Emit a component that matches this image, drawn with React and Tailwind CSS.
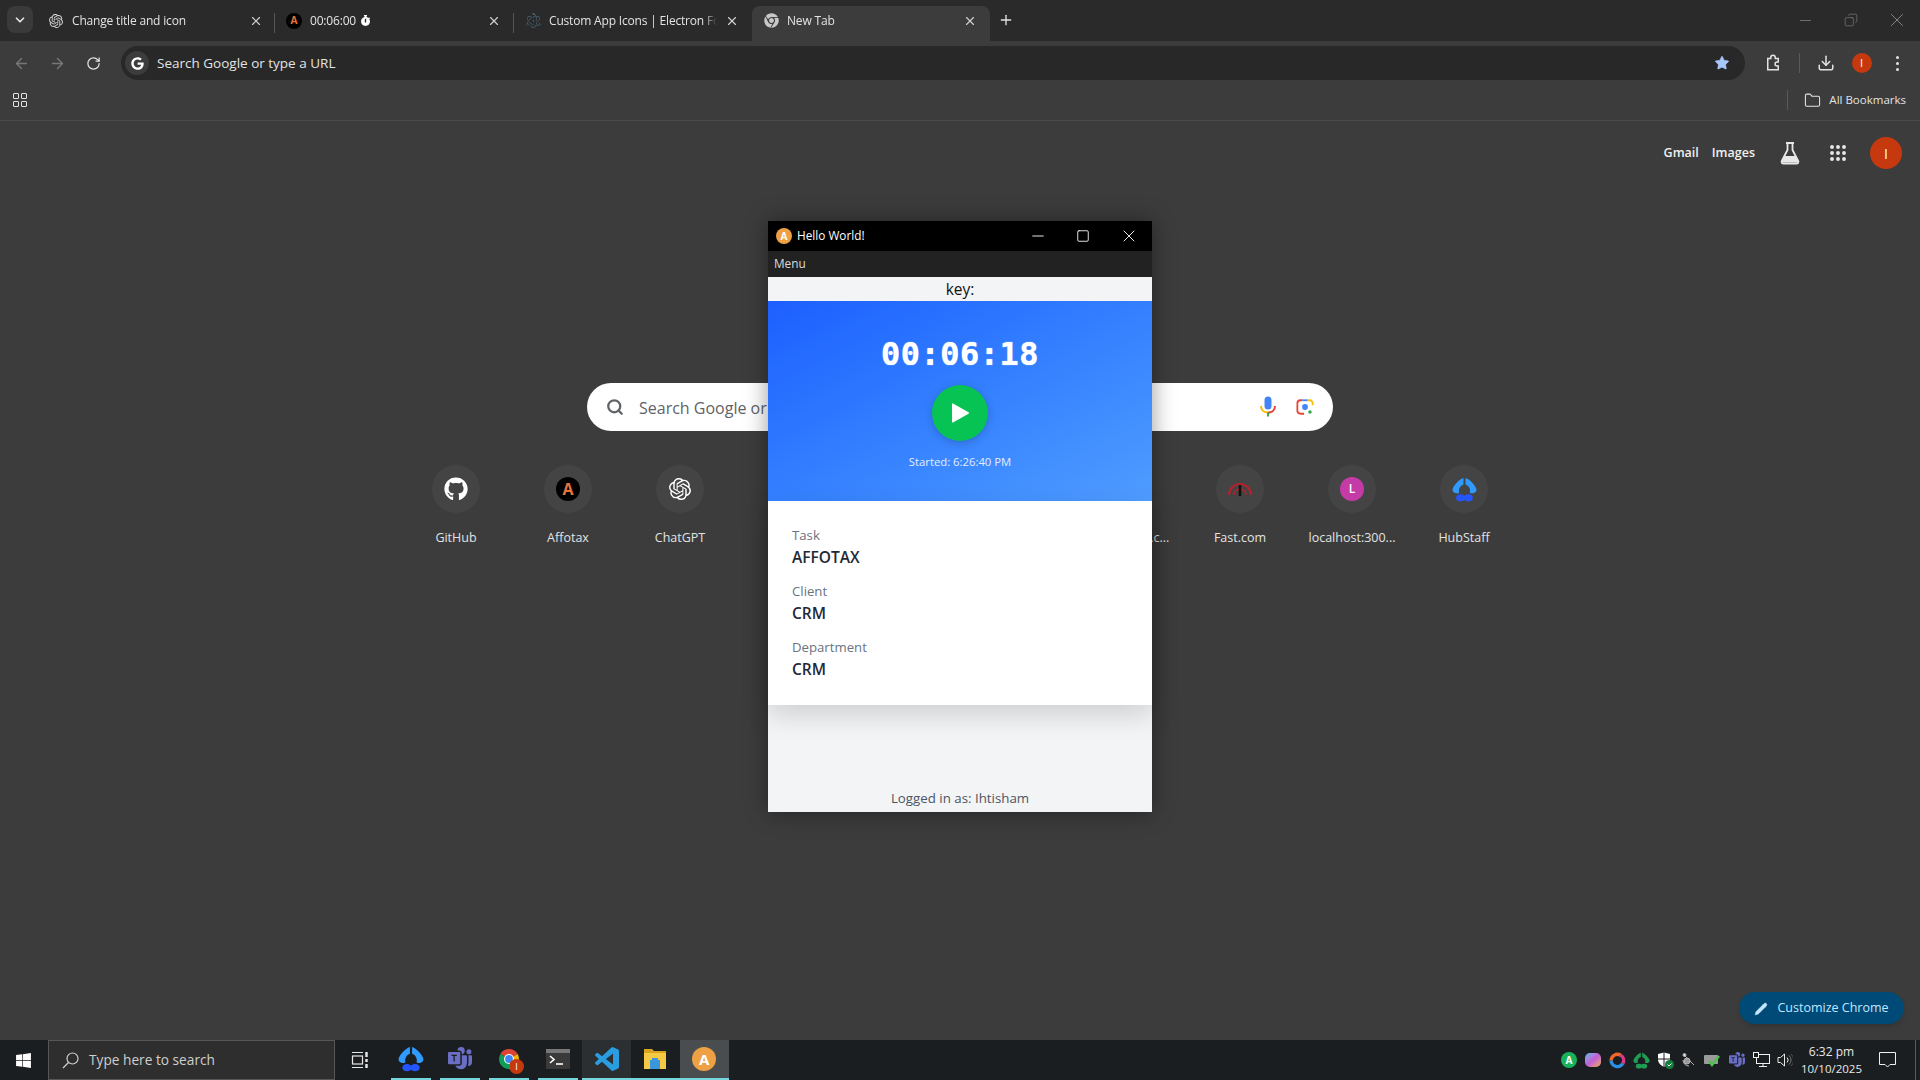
import { ArrowLeft, ArrowRight, ChevronDown, Folder, Minus, Plus, RotateCw, Square, Star, X, Download, Pencil, Search, Copy } from 'lucide-react'
import { FaGithub, FaGoogle, FaChrome, FaStopwatch, FaWindows } from 'react-icons/fa'
import { SiOpenai, SiElectron } from 'react-icons/si'
import { BsMicrosoftTeams } from 'react-icons/bs'

const SANS = 'font-["Open_Sans",sans-serif]'

function HubIcon({ size = 24, top = '#2f9bff', bottom = '#2456ff' }) {
  return (
    <svg width={size} height={size} viewBox="0 0 24 24">
      <path d="M11 1C8 1.500 2 7.500.6 11.500c-.5 2.300 1.400 4.200 4.400 4.200.6 0 1.500-.1 1.900-.6a6.200 6.200 0 0 1 4.100-7.900z" fill={top} />
      <path d="M13 1c3 .5 9 6.500 10.400 10.500.5 2.300-1.400 4.200-4.400 4.200-.6 0-1.500-.1-1.900-.6a6.200 6.200 0 0 0-4.100-7.900z" fill={top} />
      <ellipse cx="8.300" cy="20" rx="4.300" ry="3.400" fill={bottom} />
      <ellipse cx="15.700" cy="20" rx="4.300" ry="3.400" fill={bottom} />
    </svg>
  )
}

function ChromeLogo({ size = 24 }) {
  return (
    <svg width={size} height={size} viewBox="0 0 48 48">
      <path d="M24 24 6.68 14A20 20 0 0 1 41.32 14Z" fill="#db4437" />
      <path d="M24 24 41.32 14A20 20 0 0 1 24 44Z" fill="#f4b400" />
      <path d="M24 24V44A20 20 0 0 1 6.68 14Z" fill="#0f9d58" />
      <circle cx="24" cy="24" r="10" fill="#fff" />
      <circle cx="24" cy="24" r="7.8" fill="#4285f4" />
    </svg>
  )
}

function AppsGrid({ size = 18 }) {
  const dots = [4, 12, 20]
  return (
    <svg width={size} height={size} viewBox="0 0 24 24" fill="#e8e8e8">
      {dots.map((y) => dots.map((x) => <circle key={`${x}-${y}`} cx={x} cy={y} r="2.6" />))}
    </svg>
  )
}

function CodeLogo({ size = 24 }) {
  return (
    <svg width={size} height={size} viewBox="0 0 24 24" fill="#2a9de0">
      <path d="M23.15 2.587L18.21.21a1.494 1.494 0 0 0-1.705.29l-9.46 8.63-4.12-3.128a.999.999 0 0 0-1.276.057L.327 7.261A1 1 0 0 0 .326 8.74L3.899 12 .326 15.26a1 1 0 0 0 .001 1.479L1.65 17.94a.999.999 0 0 0 1.276.057l4.12-3.128 9.46 8.63a1.492 1.492 0 0 0 1.704.29l4.942-2.377A1.5 1.5 0 0 0 24 20.06V3.939a1.5 1.5 0 0 0-.85-1.352zm-5.146 14.861L10.826 12l7.178-5.448v10.896z" />
    </svg>
  )
}

function AffotaxBadge() {
  return (
    <div className="w-[24px] h-[24px] rounded-full bg-[#000] flex items-center justify-center text-[16px] font-bold text-[#e8743b]">A</div>
  )
}

function OrangeA({ size }) {
  return (
    <div className={`${size} rounded-full bg-[#eda044] flex items-center justify-center font-bold text-white`}>A</div>
  )
}

function Tab({ icon, title, active, box = 'w-[238px] pr-[13px]' }) {
  return (
    <div className={`${box} h-[35px] pl-[11px] pb-[6px] flex items-center gap-[8px] rounded-t-[8px] ${active ? 'bg-[#3c3c3c]' : ''}`}>
      <span className="w-[16px] h-[16px] flex items-center justify-center shrink-0">{icon}</span>
      <span className="flex-1 min-w-0 flex items-center gap-[4px] overflow-hidden whitespace-nowrap text-[12px] tracking-[-0.18px] text-[#e3e3e3] [mask-image:linear-gradient(to_right,black_92%,transparent)]">{title}</span>
      <X size={14} strokeWidth={2} className="shrink-0 text-[#d0d0d0]" />
    </div>
  )
}

function TabStrip() {
  return (
    <div className="h-[41px] bg-[#2a2a2a] flex items-end shrink-0">
      <div className="ml-[7px] mr-[4px] mb-[8px] w-[26px] h-[27px] rounded-[8px] bg-[#3a3a3a] flex items-center justify-center">
        <ChevronDown size={14} strokeWidth={3} className="text-[#e3e3e3]" />
      </div>
      <Tab box="w-[237px] pr-[11px]" title="Change title and icon" icon={<SiOpenai size={14} className="text-[#d8d8d8]" />} />
      <div className="w-px h-[20px] mb-[8px] bg-[#555]" />
      <Tab
        box="w-[238px] pr-[12px]"
        title={<><span>00:06:00</span><FaStopwatch size={11} className="text-white" /></>}
        icon={<span className="w-[16px] h-[16px] rounded-full bg-black flex items-center justify-center text-[10px] font-bold text-[#e8743b]">A</span>}
      />
      <div className="w-px h-[20px] mb-[8px] bg-[#555]" />
      <Tab title="Custom App Icons | Electron Fo" icon={<SiElectron size={15} className="text-[#5a7f9a]" />} />
      <Tab active title="New Tab" icon={<FaChrome size={15} className="text-[#c8c8c8]" />} />
      <Plus size={16} strokeWidth={2} className="ml-[8px] mb-[13px] text-[#e3e3e3]" />
      <div className="ml-auto flex h-[41px] text-[#8c8c8c]">
        <div className="w-[46px] flex items-center justify-center pb-[1px]"><Minus size={17} strokeWidth={1} /></div>
        <div className="w-[46px] flex items-center justify-center pb-[1px]"><Copy size={14} strokeWidth={1} className="-scale-x-100" /></div>
        <div className="w-[46px] flex items-center justify-center pb-[1px]"><X size={22} strokeWidth={1} /></div>
      </div>
    </div>
  )
}

function ExtensionIcon() {
  return (
    <svg width="18" height="18" viewBox="0 0 24 24" fill="none" stroke="#e3e3e3" strokeWidth="2">
      <path d="M5 6h4V4.500a3 3 0 0 1 6 0V6h4v4.500h-1.500a2.700 2.700 0 0 0 0 5.400H19V21H5z" />
    </svg>
  )
}

function Toolbar() {
  return (
    <div className="h-[39px] bg-[#3c3c3c] pt-[5px] flex items-start shrink-0 text-[#e3e3e3]">
      <div className="pl-[3px] flex h-[34px]">
        <div className="w-[36px] flex items-center justify-center text-[#777]"><ArrowLeft size={17} strokeWidth={2} /></div>
        <div className="w-[36px] flex items-center justify-center text-[#777]"><ArrowRight size={17} strokeWidth={2} /></div>
        <div className="w-[36px] flex items-center justify-center"><RotateCw size={15} strokeWidth={2} /></div>
      </div>
      <div className="ml-[10px] flex-1 h-[34px] rounded-full bg-[#282828] pl-[4px] pr-[15px] flex items-center">
        <span className="w-[24px] h-[24px] rounded-full bg-[#3c3c3c] flex items-center justify-center"><FaGoogle size={13} className="text-white" /></span>
        <span className="ml-[8px] text-[13.5px] text-[#e3e3e3]">Search Google or type a URL</span>
        <Star size={16} fill="#a8c7fa" strokeWidth={1} className="ml-auto text-[#a8c7fa]" />
      </div>
      <div className="ml-[10px] h-[34px] flex items-center pr-[5px]">
        <div className="w-[36px] flex justify-center"><ExtensionIcon /></div>
        <div className="ml-[8px] w-px h-[20px] bg-[#5a5a5a]" />
        <div className="ml-[8px] w-[36px] flex justify-center"><Download size={18} strokeWidth={2} /></div>
        <div className="w-[35px] flex justify-center">
          <span className="w-[20px] h-[20px] rounded-full bg-[#c6390f] flex items-center justify-center text-[11px] text-white">I</span>
        </div>
        <div className="w-[36px] flex flex-col items-center gap-[3px]">
          <span className="w-[3px] h-[3px] rounded-full bg-[#e3e3e3]" />
          <span className="w-[3px] h-[3px] rounded-full bg-[#e3e3e3]" />
          <span className="w-[3px] h-[3px] rounded-full bg-[#e3e3e3]" />
        </div>
      </div>
    </div>
  )
}

function BookmarksBar() {
  return (
    <div className="h-[41px] bg-[#3c3c3c] border-b border-[#4b4b4b] pl-[13px] pr-[14px] flex items-center shrink-0">
      <div className="grid grid-cols-2 gap-[2px]">
        <span className="w-[6px] h-[6px] border border-[#e3e3e3] rounded-[1px]" />
        <span className="w-[6px] h-[6px] border border-[#e3e3e3] rounded-[1px]" />
        <span className="w-[6px] h-[6px] border border-[#e3e3e3] rounded-[1px]" />
        <span className="w-[6px] h-[6px] border border-[#e3e3e3] rounded-[1px]" />
      </div>
      <div className="ml-auto w-px h-[20px] bg-[#5a5a5a]" />
      <Folder size={17} strokeWidth={1.5} className="ml-[16px] text-[#e3e3e3]" />
      <span className="ml-[8px] text-[11.5px] text-[#e3e3e3]">All Bookmarks</span>
    </div>
  )
}

function Shortcut({ label, icon }) {
  return (
    <div className="w-[112px] flex flex-col items-center">
      <div className="w-[48px] h-[48px] rounded-full bg-[#444] flex items-center justify-center">{icon}</div>
      <div className="mt-[15px] h-[20px] leading-[20px] text-[12.5px] text-[#e3e3e3] whitespace-nowrap">{label}</div>
    </div>
  )
}

function MicIcon() {
  return (
    <svg width="20" height="24" viewBox="0 0 20 24" fill="none">
      <rect x="6.5" y="1.5" width="7" height="13" rx="3.5" fill="#4285f4" />
      <path d="M3 11c0 4 3 6.5 7 6.5" stroke="#fbbc04" strokeWidth="2" />
      <path d="M17 11c0 4-3 6.5-7 6.500" stroke="#ea4335" strokeWidth="2" />
      <path d="M10 17.500v4" stroke="#34a853" strokeWidth="2" />
    </svg>
  )
}

function LensIcon() {
  return (
    <svg width="18" height="18" viewBox="0 0 20 20" fill="none" strokeWidth="2">
      <path d="M7 2.500H5A3.500 3.500 0 0 0 1.500 6v1" stroke="#ea4335" />
      <path d="M7 2.500h6" stroke="#4285f4" />
      <path d="M13 2.500h2A3.500 3.500 0 0 1 18.500 6v2" stroke="#fbbc04" />
      <path d="M1.500 7v7A3.500 3.500 0 0 0 5 17.500h4" stroke="#ea4335" />
      <circle cx="10" cy="10" r="3.200" fill="#4285f4" stroke="none" />
      <circle cx="15.500" cy="15.500" r="2" fill="#34a853" stroke="none" />
    </svg>
  )
}

function FastIcon() {
  return (
    <svg width="26" height="18" viewBox="0 0 26 18" fill="none" stroke="#b8202b" strokeWidth="2" className="-mt-[3px]">
      <path d="M2 16a11 11 0 0 1 22 0" />
      <path d="M7 16a6 6 0 0 1 12 0" strokeWidth="1.5" />
      <path d="M13 6v11" stroke="#111" strokeWidth="2.5" />
    </svg>
  )
}

function FlaskIcon() {
  return (
    <svg width="22" height="24" viewBox="0 0 22 24" fill="none" stroke="#e8e8e8" strokeWidth="1.8">
      <path d="M7 2h8M8.5 2v7L2.800 20c-.6 1.200.2 2.500 1.600 2.500h13.200c1.400 0 2.200-1.300 1.600-2.500L13.500 9V2" />
      <path d="M5.600 15h10.800l3 6.600H2.600z" fill="#e8e8e8" stroke="none" />
    </svg>
  )
}

function NewTabPage() {
  return (
    <div className="flex-1 min-h-0 bg-[#3c3c3c] flex flex-col items-center">
      <div className="self-stretch h-[64px] shrink-0 flex items-center justify-end pr-[18px] text-white">
        <span className="text-[12.5px] font-semibold text-[#f0f0f0]">Gmail</span>
        <span className="ml-[13px] text-[12.5px] font-semibold text-[#f0f0f0]">Images</span>
        <span className="ml-[24px] w-[22px] flex justify-center"><FlaskIcon /></span>
        <span className="ml-[26px] w-[22px] flex justify-center"><AppsGrid /></span>
        <span className="ml-[21px] w-[32px] h-[32px] rounded-full bg-[#c6390f] flex items-center justify-center text-[14px]">I</span>
      </div>
      <div className="mt-[198px] w-[746px] h-[48px] rounded-full bg-white shrink-0 flex items-center pl-[19px] pr-[19px]">
        <Search size={18} strokeWidth={3} className="text-[#5f6368]" />
        <span className="ml-[15px] pt-[1px] text-[16px] text-[#5f6368]">Search Google or type a URL</span>
        <span className="ml-auto"><MicIcon /></span>
        <span className="ml-[18px]"><LensIcon /></span>
      </div>
      <div className="mt-[34px] flex">
        <Shortcut label="GitHub" icon={<FaGithub size={24} className="text-white" />} />
        <Shortcut label="Affotax" icon={<AffotaxBadge />} />
        <Shortcut label="ChatGPT" icon={<SiOpenai size={22} className="text-white" />} />
        <Shortcut label="" />
        <Shortcut label="" />
        <Shortcut label="" />
        <Shortcut label="affotaxcrm.c..." />
        <Shortcut label="Fast.com" icon={<FastIcon />} />
        <Shortcut
          label="localhost:300..."
          icon={<span className="w-[24px] h-[24px] rounded-full bg-[#c43aa6] flex items-center justify-center text-[12px] font-semibold text-white">L</span>}
        />
        <Shortcut label="HubStaff" icon={<HubIcon size={25} />} />
      </div>
      <div className="mt-auto mb-[16px] mr-[16px] self-end w-[165px] h-[32px] pt-[1px] rounded-full bg-[#004a77] shadow-md flex items-center justify-center gap-[9px] text-[12.5px] font-medium text-[#c2e7ff]">
        <Pencil size={14} fill="#c2e7ff" strokeWidth={1} />
        Customize Chrome
      </div>
    </div>
  )
}

function Field({ label, value }) {
  return (
    <div>
      <div className="h-[20px] leading-[20px] text-[13.2px] text-[#6b7280]">{label}</div>
      <div className="h-[22px] leading-[22px] mt-[1px] text-[15.5px] font-semibold text-[#1f2937]">{value}</div>
    </div>
  )
}

function ElectronWindow() {
  return (
    <div className={`absolute left-[768px] top-[221px] w-[384px] h-[591px] flex flex-col bg-[#f3f4f6] shadow-[0_0_22px_rgba(0,0,0,0.4)] ${SANS}`}>
      <div className="h-[30px] bg-black flex items-center pl-[8px] text-white shrink-0">
        <OrangeA size="w-[16px] h-[16px] text-[10px]" />
        <span className="ml-[5px] text-[11.8px]">Hello World!</span>
        <div className="ml-auto flex items-center">
          <div className="w-[46px] flex justify-center pl-[1px]"><Minus size={18} strokeWidth={1.2} /></div>
          <div className="w-[46px] flex justify-center"><Square size={14} strokeWidth={1.5} /></div>
          <div className="w-[46px] flex justify-center"><X size={20} strokeWidth={1.1} /></div>
        </div>
      </div>
      <div className="h-[26px] bg-[#222] flex items-center pl-[6px] text-[11.8px] text-[#dcdcdc] shrink-0">Menu</div>
      <div className="h-[24px] pt-[1px] flex items-center justify-center text-[15.5px] text-[#111] shrink-0">key:</div>
      <div className="h-[200px] shrink-0 bg-linear-to-br from-[#1d5fff] to-[#4f9cff] pt-[33px] flex flex-col items-center">
        <div className="h-[40px] leading-[40px] font-['DejaVu_Sans_Mono',monospace] font-bold text-[32px] tracking-[0.5px] text-white [text-shadow:0_0_1px_#fff]">00:06:18</div>
        <div className="mt-[11px] w-[56px] h-[56px] rounded-full bg-[#07c353] shadow-[0_2px_8px_rgba(0,0,0,0.2)] flex items-center justify-center">
          <svg width="20" height="22" viewBox="0 0 20 22"><path d="M2 2.500v17a1 1 0 0 0 1.500.85l15-8.500a1 1 0 0 0 0-1.700l-15-8.500A1 1 0 0 0 2 2.500z" fill="#fff" /></svg>
        </div>
        <div className="mt-[13px] h-[16px] leading-[16px] text-[11.3px] text-[#e4eeff]">Started: 6:26:40 PM</div>
      </div>
      <div className="h-[204px] shrink-0 bg-white pt-[24px] pl-[24px] flex flex-col gap-[13px] shadow-[0_10px_25px_rgba(0,0,0,0.15)]">
        <Field label="Task" value="AFFOTAX" />
        <Field label="Client" value="CRM" />
        <Field label="Department" value="CRM" />
      </div>
      <div className="flex-1 flex items-end justify-center pb-[4px] text-[13.3px] leading-[20px] text-[#4b5563]">Logged in as: Ihtisham</div>
    </div>
  )
}

function TaskItem({ children, active = '', wide }) {
  return (
    <div className={`w-[48.8px] h-[40px] flex flex-col ${active}`}>
      <div className="flex-1 flex items-center justify-center">{children}</div>
      <div className={`h-[2px] self-center bg-[#76d6de] ${wide ? 'w-full' : 'w-[40px]'}`} />
    </div>
  )
}

function TrayIcon({ children }) {
  return <div className="w-[24px] flex items-center justify-center">{children}</div>
}

function Taskbar() {
  return (
    <div className={`h-[40px] bg-[#1b1e20] flex items-center shrink-0 ${SANS}`}>
      <div className="w-[48px] flex justify-center pr-[2px]"><FaWindows size={17} className="text-white" /></div>
      <div className="w-[287px] h-[40px] bg-[#2e2e2e] border border-[#565656] flex items-center pl-[13px]">
        <svg width="17" height="17" viewBox="0 0 17 17" fill="none" stroke="#d0d0d0" strokeWidth="1.2">
          <circle cx="10.5" cy="6.5" r="5.5" />
          <path d="M6.5 10.5 1 16" />
        </svg>
        <span className="ml-[10px] text-[13.7px] text-[#cfcfcf]">Type here to search</span>
      </div>
      <div className="w-[48px] ml-px flex justify-center">
        <svg width="18" height="18" viewBox="0 0 18 18" fill="none" stroke="#e8e8e8" strokeWidth="1.2">
          <path d="M1 1.500h11M1 16.500h11" />
          <rect x="1.500" y="5" width="10" height="8" />
          <path d="M15.500 1v5M15.500 8v3M15.500 13v4" strokeWidth="2.400" />
        </svg>
      </div>
      <div className="ml-[3px] flex">
        <TaskItem><HubIcon size={26} /></TaskItem>
        <TaskItem><BsMicrosoftTeams size={24} className="text-[#6b6fc4]" /></TaskItem>
        <TaskItem>
          <div className="relative w-[24px] h-[24px]">
            <ChromeLogo />
            <span className="absolute -right-[3px] -bottom-[3px] w-[15px] h-[15px] rounded-full bg-[#c6390f] flex items-center justify-center text-[9px] text-white">I</span>
          </div>
        </TaskItem>
        <TaskItem>
          <svg width="24" height="20" viewBox="0 0 24 20">
            <rect width="24" height="20" rx="1" fill="#3a3a3a" />
            <rect width="24" height="4" fill="#777" />
            <path d="M4 7l4 3.500L4 14" stroke="#fff" strokeWidth="1.600" fill="none" />
            <path d="M10 15h7" stroke="#fff" strokeWidth="1.600" />
          </svg>
        </TaskItem>
        <TaskItem active="bg-[#2b2f32]" wide><CodeLogo size={24} /></TaskItem>
        <TaskItem wide>
          <svg width="24" height="22" viewBox="0 0 24 22">
            <path d="M1 1h8l2 2h12v4H1z" fill="#d9a520" />
            <rect x="1" y="5" width="22" height="16" fill="#f6c945" />
            <rect x="7" y="12" width="10" height="9" fill="#3a96dd" />
            <rect x="9" y="10" width="6" height="3" fill="#3a96dd" />
          </svg>
        </TaskItem>
        <TaskItem active="bg-[#4a4d50]" wide>
          <OrangeA size="w-[24px] h-[24px] text-[15px]" />
        </TaskItem>
      </div>
      <div className="ml-auto flex items-center h-[40px]">
        <TrayIcon>
          <span className="w-[16px] h-[16px] rounded-full bg-[#17b25a] flex items-center justify-center text-[10px] font-bold text-white">A</span>
        </TrayIcon>
        <TrayIcon><span className="w-[16px] h-[14px] rounded-[5px] bg-linear-to-br from-[#36b5e8] via-[#c25bd6] to-[#f2a33c]" /></TrayIcon>
        <TrayIcon>
          <svg width="17" height="17" viewBox="0 0 16 16" fill="none" strokeWidth="3.200">
            <path d="M2 8a6 6 0 0 1 9-5" stroke="#f0672a" />
            <path d="M11 3a6 6 0 0 1 2 8" stroke="#d9398a" />
            <path d="M13 11a6 6 0 0 1-11-3" stroke="#2b8fe6" />
          </svg>
        </TrayIcon>
        <TrayIcon><HubIcon size={17} top="#1f9d55" bottom="#1f9d55" /></TrayIcon>
        <TrayIcon>
          <svg width="17" height="17" viewBox="0 0 17 17">
            <path d="M1 2l6-1.500L13 2v5c0 4-2.500 6-6 8-3.500-2-6-4-6-8z" fill="#fff" />
            <path d="M7 .5v15M1 7h12" stroke="#1b1e20" strokeWidth="1" />
            <circle cx="12.500" cy="12.500" r="4.500" fill="#15803d" />
            <path d="M10.500 12.500l1.500 1.500 2.500-2.500" stroke="#fff" fill="none" />
          </svg>
        </TrayIcon>
        <TrayIcon>
          <svg width="16" height="16" viewBox="0 0 16 16" fill="none" stroke="#b5b5b5">
            <path d="M3 3l10 10M2 8a6 6 0 0 0 6 6" />
            <circle cx="6" cy="9" r="3" fill="#999" />
            <circle cx="3.500" cy="3" r="1.500" fill="#ddd" />
          </svg>
        </TrayIcon>
        <TrayIcon>
          <svg width="18" height="16" viewBox="0 0 18 16">
            <rect y="3" width="14" height="9" rx="1" fill="#9a9a9a" />
            <path d="M5 9l3 4 7-9" stroke="#4ec04e" strokeWidth="2.500" fill="none" />
          </svg>
        </TrayIcon>
        <TrayIcon><BsMicrosoftTeams size={16} className="text-[#6b6fc4]" /></TrayIcon>
        <TrayIcon>
          <svg width="17" height="16" viewBox="0 0 17 16" fill="none" stroke="#f0f0f0">
            <rect x="3.500" y="2.500" width="13" height="9" />
            <rect x=".5" y=".5" width="5" height="5" fill="#1b1e20" />
            <path d="M10 11.500v3M6 14.500h8" />
          </svg>
        </TrayIcon>
        <TrayIcon>
          <svg width="16" height="16" viewBox="0 0 16 16" fill="none" stroke="#e8e8e8">
            <path d="M1 5.500h2.500L7.500 2v12l-4-3.500H1z" />
            <path d="M10 5.500a3.500 3.500 0 0 1 0 5" />
            <path d="M12 3.500a6 6 0 0 1 0 9" stroke="#777" />
            <path d="M14 2a8 8 0 0 1 0 12" stroke="#555" />
          </svg>
        </TrayIcon>
      </div>
      <div className="w-[69px] flex flex-col items-center leading-[17px] text-[#e8e8e8]">
        <span className="text-[12px]">6:32 pm</span>
        <span className="text-[11.5px]">10/10/2025</span>
      </div>
      <div className="w-[42px] flex justify-center">
        <svg width="17" height="16" viewBox="0 0 17 16" fill="none" stroke="#f0f0f0">
          <path d="M.5.500h16v12h-5.500l-2.500 2.500-2.500-2.500H.5z" />
        </svg>
      </div>
      <div className="ml-[7px] mr-[4px] w-px h-[40px] bg-[#5a5a5a]" />
    </div>
  )
}

export default function App() {
  return (
    <div className={`relative w-[1920px] h-[1080px] overflow-hidden flex flex-col ${SANS}`}>
      <TabStrip />
      <Toolbar />
      <BookmarksBar />
      <NewTabPage />
      <Taskbar />
      <ElectronWindow />
    </div>
  )
}
